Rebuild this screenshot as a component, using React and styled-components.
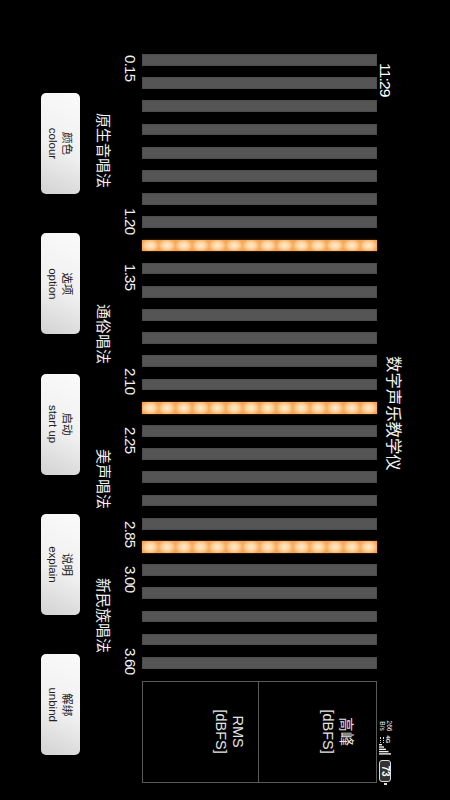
import React from "react";
import styled, { createGlobalStyle } from "styled-components";

const Global = createGlobalStyle`
  html, body { margin: 0; padding: 0; background: #000; width: 450px; height: 800px; overflow: hidden; }
  #root { width: 450px; height: 800px; overflow: hidden; }
`;

const Stage = styled.div`
  width: 800px;
  height: 450px;
  background: #000;
  color: #f2f2f2;
  font-family: "Liberation Sans", "Noto Sans CJK SC", sans-serif;
  transform: translateX(450px) rotate(90deg);
  transform-origin: top left;
  display: flex;
  flex-direction: column;
`;

const Header = styled.div`
  height: 73px;
  display: flex;
  align-items: flex-end;
  padding-left: 63px;
`;
const Time = styled.div`
  font-size: 15.5px;
  letter-spacing: -0.8px;
  line-height: 15px;
  width: 36px;
  margin-bottom: 1px;
  color: #fff;
  white-space: nowrap;
`;
const Title = styled.div`
  font-size: 16.4px;
  line-height: 18px;
  margin-left: 257px;
  width: 115px;
  white-space: nowrap;
  margin-bottom: 8px;
`;
const Status = styled.div`
  margin-left: 248px;
  display: flex;
  align-items: center;
  height: 13px;
  margin-bottom: 2px;
  color: #eee;
`;
const Speed = styled.div`
  font-size: 6.5px;
  line-height: 6.5px;
  width: 14px;
  text-align: center;
`;
const Net = styled.div`
  margin-left: 2px;
  width: 9px;
  display: flex;
  flex-direction: column;
  align-items: center;
`;
const NetLabel = styled.div`
  font-size: 6px;
  line-height: 6px;
  font-weight: 700;
`;
const NetDots = styled.div`
  margin-top: 1px;
  width: 6px;
  height: 4px;
  border-top: 1px dotted #ddd;
  border-bottom: 1px dotted #ddd;
  box-sizing: border-box;
`;
const Battery = styled.div`
  margin-left: 5px;
  width: 22px;
  height: 12px;
  box-sizing: border-box;
  border: 1px solid #ddd;
  border-radius: 3px;
  background: #333;
  font-size: 10px;
  line-height: 10px;
  font-weight: 700;
  text-align: center;
  color: #fff;
`;
const Nub = styled.div`
  width: 2px;
  height: 3px;
  margin-left: 1px;
  background: #ddd;
`;

const Meter = styled.div`
  display: flex;
  padding-left: 54px;
  height: 235px;
`;
const Bars = styled.div`
  display: flex;
  gap: 11.4px;
`;
const Bar = styled.div`
  width: 11.8px;
  height: 235px;
  box-sizing: border-box;
  background: ${(p) =>
    p.$on
      ? "radial-gradient(ellipse 60% 55% at center, #ffeed8 0%, #ffd096 55%, #f5a554 100%) 0 0 / 100% 16.8px"
      : "#555"};
  ${(p) => (p.$on ? "" : "border: 1px solid #4c4c4c;")}
  ${(p) => (p.$on ? "box-shadow: 0 0 2px rgba(200,110,30,.6);" : "")}
`;
const Table = styled.div`
  margin-left: 12px;
  width: 102px;
  height: 235px;
  box-sizing: border-box;
  border: 1px solid #5a5a5a;
  display: grid;
  grid-template-rows: 117px 1fr;
`;
const Cell = styled.div`
  padding-top: ${(p) => p.$top}px;
  text-align: center;
  font-size: 14.5px;
  line-height: ${(p) => p.$lead}px;
  color: #e4e4e4;
  & + & { border-top: 1px solid #5a5a5a; }
`;

const Scale = styled.div`
  display: flex;
  margin-top: 4px;
  padding-left: 55px;
  height: 16px;
`;
const Tick = styled.div`
  width: 26px;
  font-size: 15px;
  letter-spacing: -0.7px;
  line-height: 16px;
  margin-left: ${(p) => p.$gap}px;
  white-space: nowrap;
`;

const Groups = styled.div`
  display: flex;
  margin-top: 9px;
  padding-left: 113px;
  height: 20px;
`;
const Group = styled.div`
  font-size: 15px;
  line-height: 20px;
  margin-left: ${(p) => p.$gap}px;
  white-space: nowrap;
`;

const Buttons = styled.div`
  display: flex;
  gap: 39.3px;
  margin-top: 13px;
  padding-left: 93px;
`;
const Button = styled.button`
  width: 101px;
  height: 39px;
  padding: 0;
  border: none;
  border-radius: 5px;
  background: linear-gradient(115deg, #fafafa 0%, #f0f0f0 55%, #d2d2d2 100%);
  color: #222;
  font-family: inherit;
  font-size: 11.5px;
  line-height: 14px;
`;

const bars = Array.from({ length: 27 }, (_, i) => [8, 15, 21].includes(i));
const ticks = [
  ["0.15", 0], ["1.20", 127], ["1.35", 30], ["2.10", 78],
  ["2.25", 33], ["2.85", 68], ["3.00", 19], ["3.60", 56],
];
const groups = [
  ["原生音唱法", 0], ["通俗唱法", 116], ["美声唱法", 85], ["新民族唱法", 69],
];
const buttons = [
  ["颜色", "colour"], ["选项", "option"], ["启动", "start up"], ["说明", "explain"], ["解绑", "unbind"],
];

export default function App() {
  return (
    <>
      <Global />
      <Stage>
        <Header>
          <Time>11:29</Time>
          <Title>数字声乐教学仪</Title>
          <Status>
            <Speed>266<br />B/s</Speed>
            <Net>
              <NetLabel>4G</NetLabel>
              <NetDots />
            </Net>
            <svg width="11" height="12" viewBox="0 0 11 12" fill="#eee">
              <rect x="0" y="9" width="1.4" height="3" />
              <rect x="2.3" y="7" width="1.4" height="5" />
              <rect x="4.6" y="5" width="1.4" height="7" />
              <rect x="6.9" y="2.5" width="1.4" height="9.5" />
              <rect x="9.2" y="0" width="1.4" height="12" />
            </svg>
            <Battery>73</Battery>
            <Nub />
          </Status>
        </Header>
        <Meter>
          <Bars>
            {bars.map((on, i) => <Bar key={i} $on={on} />)}
          </Bars>
          <Table>
            <Cell $top={21} $lead={18}>高峰<br />[dBFS]</Cell>
            <Cell $top={12} $lead={16.5}>RMS<br />[dBFS]</Cell>
          </Table>
        </Meter>
        <Scale>
          {ticks.map(([t, g]) => <Tick key={t} $gap={g}>{t}</Tick>)}
        </Scale>
        <Groups>
          {groups.map(([t, g]) => <Group key={t} $gap={g}>{t}</Group>)}
        </Groups>
        <Buttons>
          {buttons.map(([a, b]) => <Button key={b}>{a}<br />{b}</Button>)}
        </Buttons>
      </Stage>
    </>
  );
}
